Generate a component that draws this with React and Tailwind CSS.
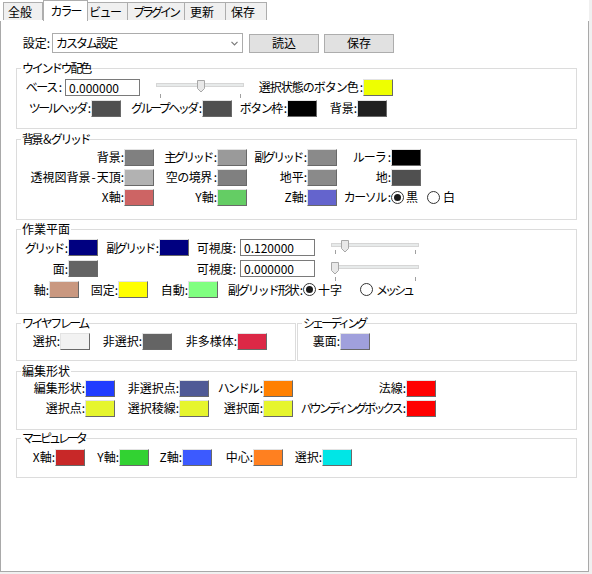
import React from "react";

const FONT = "font-['Noto_Sans_CJK_JP','Noto_Sans',sans-serif]";

const Sw = ({ bg }) => (
  <span
    className={`block w-[30px] h-[17px] shrink-0 border border-t-[#e3e3e3] border-l-[#e3e3e3] border-r-[#696969] border-b-[#696969] ${bg}`}
  />
);

const L = ({ w, t = "", extra = "", children, colon = true }) => (
  <span className={`${w} ${extra} shrink-0 text-right whitespace-nowrap`}>
    <span className={t}>{children}</span>
    {colon && <span className={t ? "ml-[2px]" : ""}>:</span>}
  </span>
);

const It = ({ w, l, t = "", bg }) => (
  <>
    <L w={w} t={t}>
      {l}
    </L>
    <Sw bg={bg} />
  </>
);

const Input = ({ v }) => (
  <input
    readOnly
    value={v}
    className="w-[75px] h-[17px] shrink-0 border border-[#7a7a7a] bg-white pl-[3px] text-[12px] leading-[14px] outline-none"
  />
);

const Slider = ({ pos, ty, tk }) => (
  <svg width="88" height="22" viewBox="0 0 88 22" className="shrink-0 self-start overflow-visible">
    <rect x="0.5" y={ty + 0.5} width="87" height="3" fill="#e7eaea" stroke="#d6d6d6" />
    <line x1="4.5" x2="4.5" y1={tk} y2={tk + 4} stroke="#a0a0a0" />
    <line x1="84.5" x2="84.5" y1={tk} y2={tk + 4} stroke="#a0a0a0" />
    <path
      d={`M${pos + 0.5} ${ty - 2.5} h7 v8 l-3.5 3.5 l-3.5 -3.5 z`}
      fill="#e8e8e8"
      stroke="#a8a8a8"
    />
  </svg>
);

const Radio = ({ on }) => (
  <span className="w-[13px] h-[13px] shrink-0 rounded-full border border-[#333333] bg-white flex items-center justify-center">
    {on && <span className="block w-[7px] h-[7px] rounded-full bg-[#1a1a1a]" />}
  </span>
);

const Row = ({ h = "h-[20px]", children }) => (
  <div className={`flex items-center ${h}`}>{children}</div>
);

const Legend = ({ t = "", children }) => (
  <legend className="ml-[4px] px-[1px] leading-[14px] whitespace-nowrap">
    <span className={t}>{children}</span>
  </legend>
);

const TAB = "h-[18px] mb-[1px] border-t border-r border-[#adadad] bg-[#f0f0f0] flex items-center overflow-hidden";

export default function App() {
  return (
    <div className={`w-[592px] h-[574px] bg-[#f0f0f0] text-[12px] leading-[14px] text-black ${FONT}`}>
      <div className="bg-white w-[589px]">
        {/* tabs */}
        <div className="flex items-end h-[21px] pl-[3px] relative z-10 bg-white whitespace-nowrap">
          <div className={`w-[40px] border-l pl-[4px] ${TAB}`}>全般</div>
          <div className="w-[45px] h-[21px] border-l border-t border-r border-[#adadad] bg-white flex items-center justify-center overflow-hidden">
            <span className="tracking-[-2px]">カラー</span>
          </div>
          <div className={`w-[40px] pl-[1px] ${TAB}`}>
            <span className="tracking-[-1.5px]">ビュー</span>
          </div>
          <div className={`w-[57px] pl-[5px] ${TAB}`}>
            <span className="tracking-[-3px]">プラグイン</span>
          </div>
          <div className={`w-[41px] pl-[5px] ${TAB}`}>更新</div>
          <div className={`w-[41px] pl-[5px] ${TAB}`}>保存</div>
        </div>

        {/* panel */}
        <div className="-mt-[1px] w-[589px] h-[552px] border border-[#a9a9a9] bg-white pl-[15px] pr-[11px] pt-[12px]">
          {/* preset row */}
          <div className="flex items-center h-[20px]">
            <L w="w-[36px]" extra="pr-[2px]">設定</L>
            <div className="w-[191px] h-[20px] border border-[#acacac] bg-white flex items-center justify-between pl-[3px] pr-[4px]">
              <span className="tracking-[-2px]">カスタム設定</span>
              <svg width="7" height="5" viewBox="0 0 7 5">
                <path d="M0.5 0.8 L3.5 3.8 L6.5 0.8" fill="none" stroke="#7a7a7a" strokeWidth="1.2" />
              </svg>
            </div>
            <div className="ml-[6px] w-[70px] h-[19px] border border-[#adadad] bg-[#e1e1e1] flex items-center justify-center">
              読込
            </div>
            <div className="ml-[5px] w-[70px] h-[19px] border border-[#adadad] bg-[#e1e1e1] flex items-center justify-center">
              保存
            </div>
          </div>

          {/* window colors */}
          <fieldset className="mt-[8px] border border-[#dcdcdc] pb-[10px]">
            <Legend t="tracking-[-2.3px]">ウインドウ配色</Legend>
            <div className="pt-[2px] flex flex-col gap-[1px]">
              <Row>
                <L w="w-[48px]" t="tracking-[-1.5px]" extra="pr-[3px]">
                  ベース
                </L>
                <Input v="0.000000" />
                <span className="w-[16px] shrink-0" />
                <Slider pos={41} ty={6} tk={17} />
                <It w="w-[119px]" t="tracking-[-1px]" l="選択状態のボタン色" bg="bg-[#eeff00]" />
              </Row>
              <Row>
                <It w="w-[74px]" t="tracking-[-2.5px]" l="ツールヘッダ" bg="bg-[#505050]" />
                <It w="w-[81px]" t="tracking-[-2.5px]" l="グループヘッダ" bg="bg-[#505050]" />
                <It w="w-[55px]" t="tracking-[-1.5px]" l="ボタン枠" bg="bg-[#000000]" />
                <It w="w-[40px]" l="背景" bg="bg-[#202020]" />
              </Row>
            </div>
          </fieldset>

          {/* background & grid */}
          <fieldset className="mt-[3px] border border-[#dcdcdc] pb-[12px]">
            <Legend t="tracking-[-2.4px]">背景＆グリッド</Legend>
            <div className="pt-[1px] flex flex-col">
              <Row>
                <It w="w-[107px]" l="背景" bg="bg-[#808080]" />
                <It w="w-[63px]" t="tracking-[-2.5px]" l="主グリッド" bg="bg-[#9a9a9a]" />
                <It w="w-[60px]" t="tracking-[-2.5px]" l="副グリッド" bg="bg-[#8a8a8a]" />
                <It w="w-[54px]" t="tracking-[-1px]" l="ルーラ" bg="bg-[#000000]" />
              </Row>
              <Row>
                <It
                  w="w-[107px]"
                  l={
                    <>
                      透視図背景<span className="mx-[1px]">-</span>天頂
                    </>
                  }
                  bg="bg-[#b2b2b2]"
                />
                <It w="w-[63px]" t="tracking-[-0.5px]" l="空の境界" bg="bg-[#808080]" />
                <It w="w-[60px]" l="地平" bg="bg-[#8a8a8a]" />
                <It w="w-[54px]" l="地" bg="bg-[#505050]" />
              </Row>
              <Row>
                <It w="w-[107px]" l="X軸" bg="bg-[#cd6464]" />
                <It w="w-[63px]" l="Y軸" bg="bg-[#64cd64]" />
                <It w="w-[60px]" l="Z軸" bg="bg-[#6464cd]" />
                <L w="w-[54px]" t="tracking-[-1.5px]">
                  カーソル
                </L>
                <Radio on />
                <span className="ml-[2px]">黒</span>
                <span className="ml-[9px]">
                  <Radio />
                </span>
                <span className="ml-[3px]">白</span>
              </Row>
            </div>
          </fieldset>

          {/* work plane */}
          <fieldset className="mt-[2px] border border-[#dcdcdc] pb-[13px]">
            <Legend>作業平面</Legend>
            <div className="pt-[1px] flex flex-col">
              <Row h="h-[21px]">
                <It w="w-[51px]" t="tracking-[-2.5px]" l="グリッド" bg="bg-[#000080]" />
                <It w="w-[61px]" t="tracking-[-2.5px]" l="副グリッド" bg="bg-[#000080]" />
                <L w="w-[51px]" extra="pr-[4px]">
                  可視度
                </L>
                <Input v="0.120000" />
                <span className="w-[16px] shrink-0" />
                <Slider pos={10} ty={6} tk={13} />
              </Row>
              <Row h="h-[21px]">
                <It w="w-[51px]" l="面" bg="bg-[#646464]" />
                <span className="w-[91px] shrink-0" />
                <L w="w-[51px]" extra="pr-[4px]">
                  可視度
                </L>
                <Input v="0.000000" />
                <span className="w-[16px] shrink-0" />
                <Slider pos={0} ty={7} tk={19} />
              </Row>
              <Row h="h-[21px]">
                <It w="w-[32px]" l="軸" bg="bg-[#c99880]" />
                <It w="w-[39px]" l="固定" bg="bg-[#ffff00]" />
                <It w="w-[40px]" l="自動" bg="bg-[#80ff80]" />
                <L w="w-[85px]" t="tracking-[-2px]">
                  副グリッド形状
                </L>
                <Radio on />
                <span className="ml-[2px]">十字</span>
                <span className="ml-[18px]">
                  <Radio />
                </span>
                <span className="ml-[3px] tracking-[-3px]">メッシュ</span>
              </Row>
            </div>
          </fieldset>

          {/* wireframe & shading */}
          <div className="mt-[2px] flex gap-[1px]">
            <fieldset className="w-[280px] border border-[#dcdcdc] pb-[9px]">
              <Legend t="tracking-[-2.5px]">ワイヤフレーム</Legend>
              <div className="pt-[1px]">
                <Row>
                  <It w="w-[43px]" l="選択" bg="bg-[#f2f2f2]" />
                  <It w="w-[52px]" l="非選択" bg="bg-[#646464]" />
                  <It w="w-[65px]" l="非多様体" bg="bg-[#dc2846]" />
                </Row>
              </div>
            </fieldset>
            <fieldset className="w-[280px] border border-[#dcdcdc] pb-[9px]">
              <Legend t="tracking-[-3px]">シェーディング</Legend>
              <div className="pt-[1px]">
                <Row>
                  <It w="w-[42px]" l="裏面" bg="bg-[#a0a0dc]" />
                </Row>
              </div>
            </fieldset>
          </div>

          {/* edit shape */}
          <fieldset className="mt-[3px] border border-[#dcdcdc] pb-[11px]">
            <Legend>編集形状</Legend>
            <div className="flex flex-col">
              <Row>
                <It w="w-[68px]" l="編集形状" bg="bg-[#203cff]" />
                <It w="w-[64px]" l="非選択点" bg="bg-[#505a96]" />
                <It w="w-[54px]" t="tracking-[-2px]" l="ハンドル" bg="bg-[#ff8000]" />
                <It w="w-[113px]" l="法線" bg="bg-[#ff0000]" />
              </Row>
              <Row>
                <It w="w-[68px]" l="選択点" bg="bg-[#e6f52d]" />
                <It w="w-[64px]" l="選択稜線" bg="bg-[#e6f52d]" />
                <It w="w-[54px]" l="選択面" bg="bg-[#e6f52d]" />
                <It w="w-[113px]" t="tracking-[-2.8px]" l="バウンディングボックス" bg="bg-[#ff0000]" />
              </Row>
            </div>
          </fieldset>

          {/* manipulator */}
          <fieldset className="mt-[1px] border border-[#dcdcdc] pb-[10px]">
            <Legend t="tracking-[-3px]">マニピュレータ</Legend>
            <div className="pt-[2px]">
              <Row>
                <It w="w-[38px]" l="X軸" bg="bg-[#c82828]" />
                <It w="w-[34px]" l="Y軸" bg="bg-[#32d232]" />
                <It w="w-[33px]" l="Z軸" bg="bg-[#3c5aff]" />
                <It w="w-[41px]" l="中心" bg="bg-[#ff8020]" />
                <It w="w-[39px]" l="選択" bg="bg-[#00e6e6]" />
              </Row>
            </div>
          </fieldset>
        </div>
      </div>
    </div>
  );
}
